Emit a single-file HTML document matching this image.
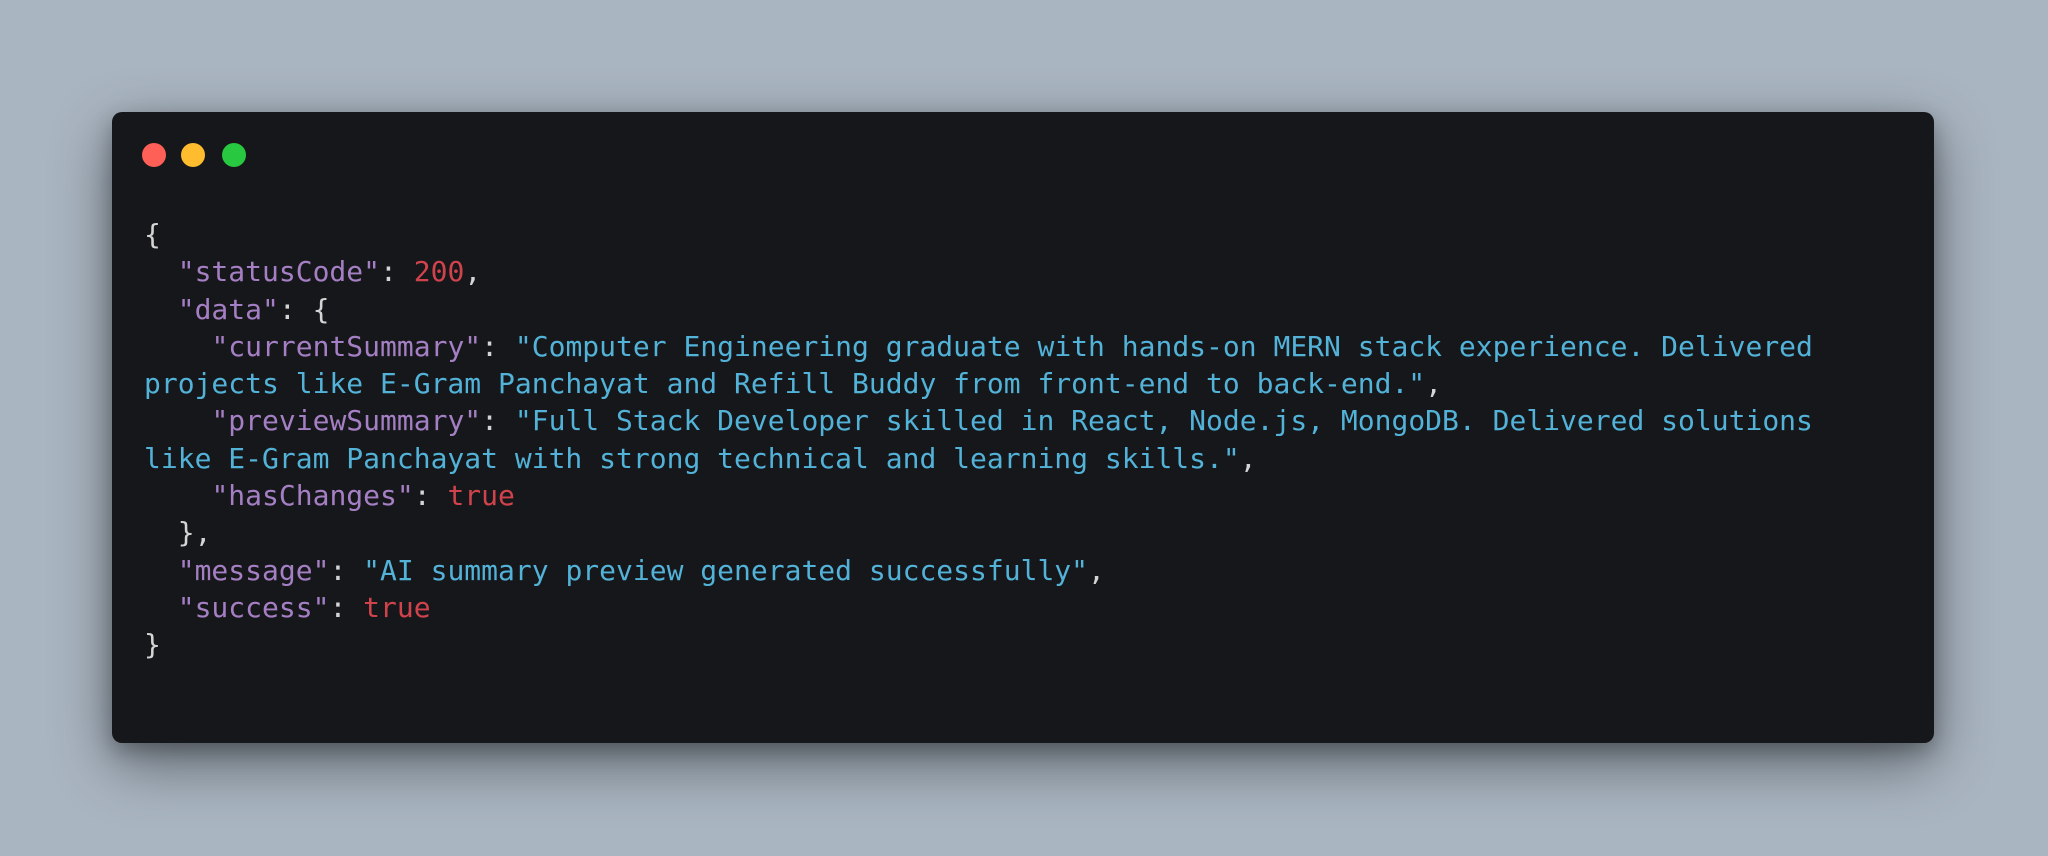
<!DOCTYPE html>
<html><head><meta charset="utf-8">
<style>
html,body{margin:0;padding:0}
body{width:2048px;height:856px;overflow:hidden;background:#a9b5c1;position:relative}
.win{position:absolute;left:112px;top:112px;width:1822px;height:631px;background:#16171a;border-radius:10px;box-shadow:0 20px 60px rgba(0,0,0,0.45),0 8px 20px rgba(0,0,0,0.25)}
.dot{position:absolute;top:143px;width:24px;height:24px;border-radius:50%}
pre{position:absolute;left:144px;top:216px;margin:0;font-family:"DejaVu Sans Mono","Liberation Mono",monospace;font-size:28px;line-height:37.3px;color:#d4d4d4;white-space:pre}
.k{color:#a57fc4}.s{color:#52b2d8}.n{color:#d1434c}
</style></head><body>
<div class="win"></div>
<div class="dot" style="left:142px;background:#fe5f57"></div>
<div class="dot" style="left:181px;background:#febc2e"></div>
<div class="dot" style="left:222px;background:#28c840"></div>
<pre>{
  <span class="k">"statusCode"</span>: <span class="n">200</span>,
  <span class="k">"data"</span>: {
    <span class="k">"currentSummary"</span>: <span class="s">"Computer Engineering graduate with hands-on MERN stack experience. Delivered
projects like E-Gram Panchayat and Refill Buddy from front-end to back-end."</span>,
    <span class="k">"previewSummary"</span>: <span class="s">"Full Stack Developer skilled in React, Node.js, MongoDB. Delivered solutions
like E-Gram Panchayat with strong technical and learning skills."</span>,
    <span class="k">"hasChanges"</span>: <span class="n">true</span>
  },
  <span class="k">"message"</span>: <span class="s">"AI summary preview generated successfully"</span>,
  <span class="k">"success"</span>: <span class="n">true</span>
}</pre>
</body></html>
